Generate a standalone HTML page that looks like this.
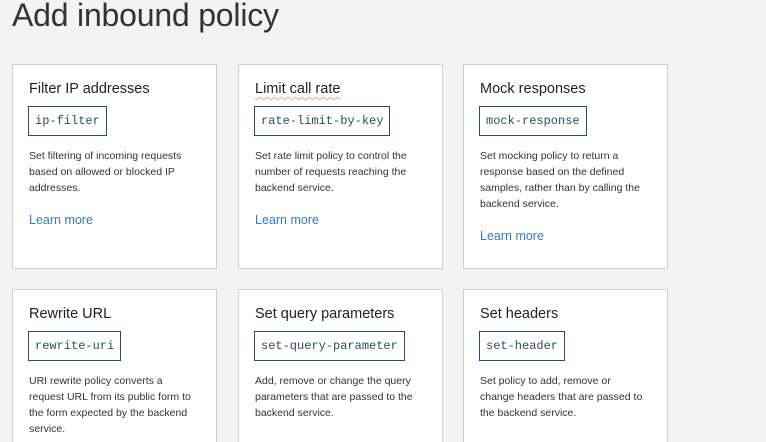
<!DOCTYPE html>
<html><head><style>
html,body{margin:0;width:766px;height:442px;overflow:hidden}
body{background:#f3f3f3;font-family:"Liberation Sans",sans-serif;position:relative}
h1{position:absolute;left:12px;top:-3px;margin:0;font-weight:300;font-size:32px;color:#333;letter-spacing:-0.2px}
.c{position:absolute;width:205px;height:205px;background:#fff;border:1px solid #cfcfcf;box-sizing:border-box}
.r2{height:153px;border-bottom:none}
.t{position:absolute;left:16px;top:16px;font-size:14.5px;color:#222}
.k{position:absolute;left:15px;top:41px;height:30px;box-sizing:border-box;border:1px solid #2f4a66;padding:0 6px;line-height:28px;font-family:"Liberation Mono",monospace;font-size:12px;color:#2f4a66}
.d{position:absolute;left:16px;top:83px;width:168px;font-size:10.5px;line-height:16px;color:#333}
.l{position:absolute;left:16px;font-size:12.5px;color:#3a78c2}
.sq{text-decoration:underline wavy #f0a0a0;text-decoration-thickness:1px;text-underline-offset:3px}
</style></head><body>
<h1>Add inbound policy</h1>
<div class="c" style="left:12px;top:64px"><div class="t">Filter IP addresses</div><div class="k">ip-filter</div><div class="d">Set filtering of incoming requests based on allowed or blocked IP addresses.</div><div class="l" style="top:148px">Learn more</div></div>
<div class="c" style="left:238px;top:64px"><div class="t"><span class="sq">Limit call rate</span></div><div class="k">rate-limit-by-key</div><div class="d">Set rate limit policy to control the number of requests reaching the backend service.</div><div class="l" style="top:148px">Learn more</div></div>
<div class="c" style="left:463px;top:64px"><div class="t">Mock responses</div><div class="k">mock-response</div><div class="d" style="width:160px">Set mocking policy to return a response based on the defined samples, rather than by calling the backend service.</div><div class="l" style="top:164px">Learn more</div></div>
<div class="c r2" style="left:12px;top:289px"><div class="t">Rewrite URL</div><div class="k">rewrite-uri</div><div class="d" style="width:162px">URI rewrite policy converts a request URL from its public form to the form expected by the backend service.</div></div>
<div class="c r2" style="left:238px;top:289px"><div class="t">Set query parameters</div><div class="k">set-query-parameter</div><div class="d">Add, remove or change the query parameters that are passed to the backend service.</div></div>
<div class="c r2" style="left:463px;top:289px"><div class="t">Set headers</div><div class="k">set-header</div><div class="d" style="width:164px">Set policy to add, remove or change headers that are passed to the backend service.</div></div>
</body></html>
